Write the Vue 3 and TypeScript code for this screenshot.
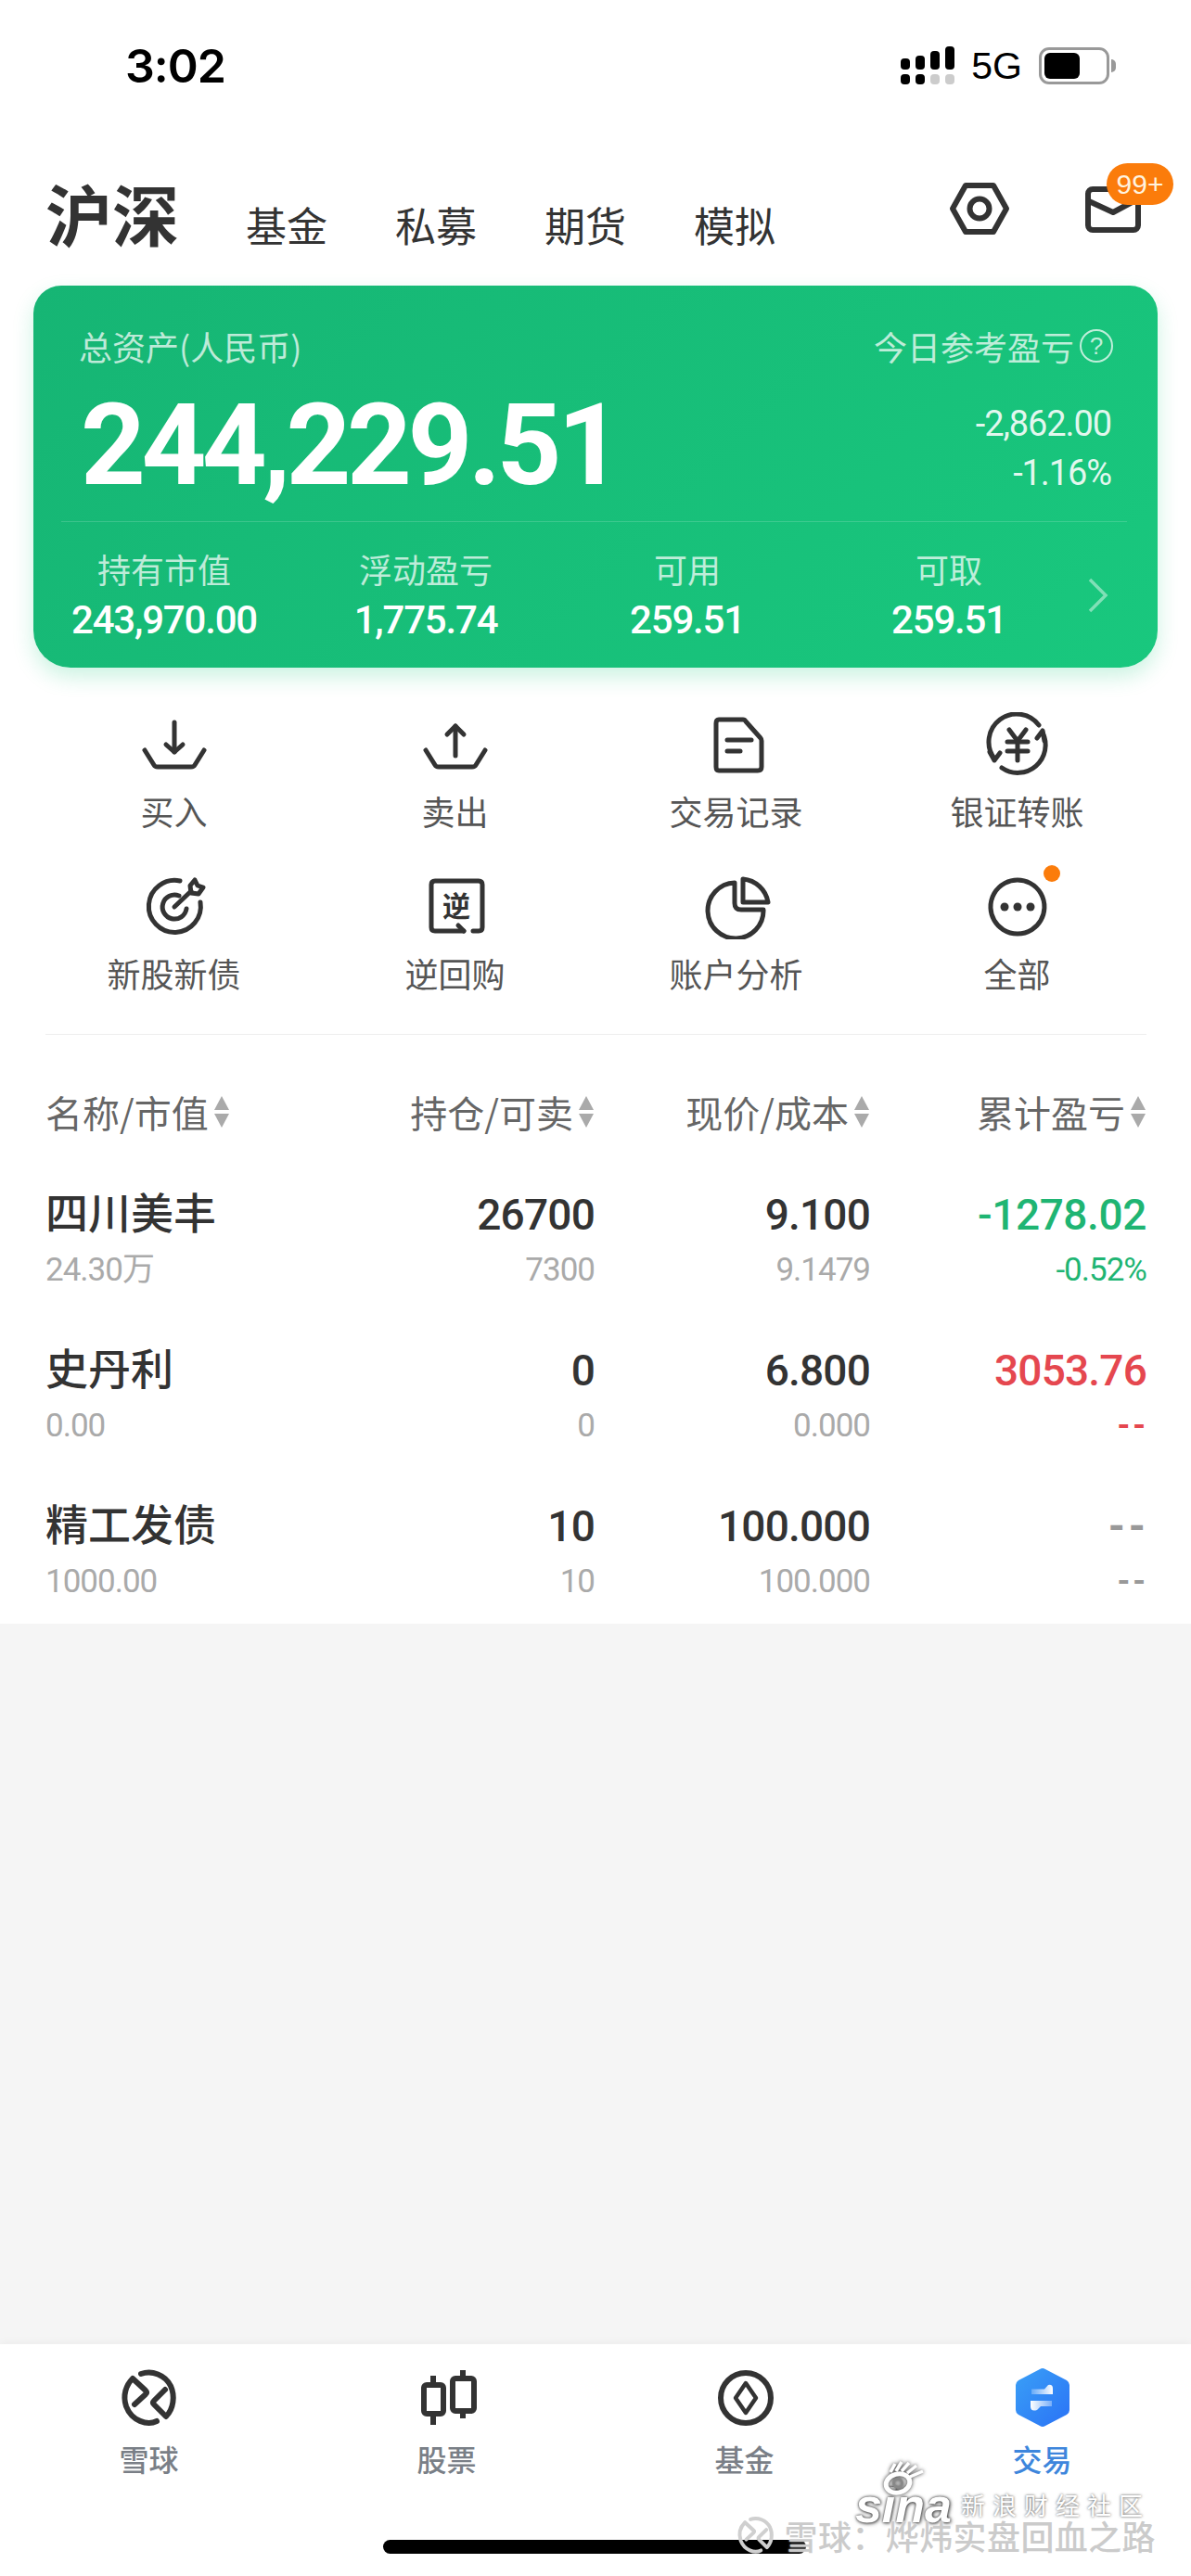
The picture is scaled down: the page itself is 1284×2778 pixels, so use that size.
<script setup lang="ts">
interface Action {
  label: string
  paths: string[]
  glyph?: string
  dot?: boolean
}

interface Position {
  name: string
  value: string
  qty: string
  sellable: string
  price: string
  cost: string
  pnl: string
  pnlPct: string
  tone: string
}

const basket = 'M8 41 L18 57 Q19 59 22 59 H58 Q61 59 62 57 L72 41'

const tabs = ['基金', '私募', '期货', '模拟']

const stats = [
  { label: '持有市值', value: '243,970.00' },
  { label: '浮动盈亏', value: '1,775.74' },
  { label: '可用', value: '259.51' },
  { label: '可取', value: '259.51' },
]

const actions: Action[] = [
  { label: '买入', paths: [basket, 'M40 11 V43', 'M31 35 L40 43 L49 35'] },
  { label: '卖出', paths: [basket, 'M40 47 V15', 'M31 24 L40 15 L49 24'] },
  {
    label: '交易记录',
    paths: [
      'M21 8 H47 Q49 8 50 10 L66 28 Q67 29 67 31 V59 Q67 63 63 63 H21 Q18 63 18 59 V12 Q18 8 21 8 Z',
      'M30 30 H56',
      'M30 42 H44',
    ],
  },
  {
    label: '银证转账',
    paths: [
      'M15 50 A30 30 0 0 1 63 14',
      'M67 22 A30 30 0 0 1 23 60',
      'M61 28 L67 20 L69 31',
      'M10 43 L15 52 L21 44',
      'M31 19 L40 31 L49 19',
      'M29 32 H51',
      'M29 42 H51',
      'M40 32 V52',
    ],
  },
  {
    label: '新股新债',
    paths: [
      'M46 7 A28 28 0 1 0 68 30',
      'M45 23 A13 13 0 1 0 53 37',
      'M40 35 L58 18',
      'M57 12 L62 6 L65 12 L71 14 L66 21 L58 20 Z',
    ],
  },
  {
    label: '逆回购',
    paths: [
      'M59 61 H65 Q69 61 69 57 V11 Q69 7 65 7 H18 Q14 7 14 11 V57 Q14 61 18 61 H49',
      'M43 55 L49 61',
    ],
    glyph: '逆',
  },
  {
    label: '账户分析',
    paths: [
      'M38 9 A30 30 0 1 0 69 38 H45 Q38 38 38 31 Z',
      'M47 5 A30 30 0 0 1 74 30 H47 Z',
    ],
  },
  {
    label: '全部',
    paths: [
      'M40 6 A29 29 0 1 1 39.9 6 Z',
      'M26 35 h0.01',
      'M40 35 h0.01',
      'M54 35 h0.01',
    ],
    dot: true,
  },
]

const columns = ['持仓/可卖', '现价/成本', '累计盈亏']

const positions: Position[] = [
  { name: '四川美丰', value: '24.30万', qty: '26700', sellable: '7300', price: '9.100', cost: '9.1479', pnl: '-1278.02', pnlPct: '-0.52%', tone: 'down' },
  { name: '史丹利', value: '0.00', qty: '0', sellable: '0', price: '6.800', cost: '0.000', pnl: '3053.76', pnlPct: '--', tone: 'up' },
  { name: '精工发债', value: '1000.00', qty: '10', sellable: '10', price: '100.000', cost: '100.000', pnl: '--', pnlPct: '--', tone: 'flat' },
]

const snowball = [
  'M43 60 C33 65 16 60 10 44 C6 32 10 21 17 14 L31 27 Q33 29 31 31 L19 42',
  'M26 9 C38 5 52 10 58 22 C63 33 61 47 53 55 L40 42 Q38 40 40 38 L52 26',
]
</script>

<template>
  <div class="page">
    <div class="status">
      <span class="time">3:02</span>
      <div class="status-right">
        <svg class="signal" width="60" height="42" viewBox="0 0 60 42">
          <rect x="0" y="13" width="10" height="12" rx="4" fill="#000" />
          <rect x="16" y="10" width="10" height="15" rx="4" fill="#000" />
          <rect x="32" y="5" width="10" height="20" rx="4" fill="#000" />
          <rect x="48" y="0" width="10" height="25" rx="4" fill="#000" />
          <rect x="0" y="30" width="10" height="11" rx="4" fill="#000" />
          <rect x="16" y="30" width="10" height="11" rx="4" fill="#000" />
          <rect x="32" y="30" width="10" height="11" rx="4" fill="#ccc" />
          <rect x="48" y="30" width="10" height="11" rx="4" fill="#ccc" />
        </svg>
        <span class="net">5G</span>
        <div class="battery"><div class="battery-fill"></div></div>
        <div class="battery-nub"></div>
      </div>
    </div>

    <div class="header">
      <span class="market">沪深</span>
      <span v-for="tab in tabs" :key="tab" class="tab">{{ tab }}</span>
      <div class="header-icons">
        <svg width="66" height="60" viewBox="0 0 66 60" fill="none" stroke="#333" stroke-width="6" stroke-linejoin="round">
          <path d="M18 5 H48 L62 30 L48 55 H18 L4 30 Z" />
          <circle cx="33" cy="30" r="10.5" />
        </svg>
        <div class="mail">
          <svg width="62" height="52" viewBox="0 0 62 52" fill="none" stroke="#333" stroke-width="6" stroke-linejoin="round" stroke-linecap="round">
            <rect x="4" y="4" width="54" height="44" rx="5" />
            <path d="M5 17 L31 29 L57 15" />
          </svg>
          <span class="badge">99+</span>
        </div>
      </div>
    </div>

    <div class="card">
      <div class="card-top">
        <span>总资产(人民币)</span>
        <span class="today">今日参考盈亏<i class="help">?</i></span>
      </div>
      <div class="hero">
        <span class="total">244,229.51</span>
        <div class="today-values">
          <span>-2,862.00</span>
          <span>-1.16%</span>
        </div>
      </div>
      <div class="stats">
        <div v-for="s in stats" :key="s.label" class="stat">
          <span class="stat-label">{{ s.label }}</span>
          <span class="stat-value">{{ s.value }}</span>
        </div>
      </div>
      <svg class="chevron" width="26" height="38" viewBox="0 0 26 38" fill="none" stroke="rgba(255,255,255,0.45)" stroke-width="3.5">
        <path d="M4 2 L21 19 L4 36" />
      </svg>
    </div>

    <div class="actions">
      <div v-for="a in actions" :key="a.label" class="action">
        <div class="action-icon">
          <svg width="80" height="70" viewBox="0 0 80 70" fill="none" stroke="#333" stroke-width="5" stroke-linecap="round" stroke-linejoin="round">
            <path v-for="d in a.paths" :key="d" :d="d" :stroke-width="d.includes('h0.01') ? 9 : 5" />
            <text v-if="a.glyph" x="41" y="45" text-anchor="middle" class="glyph">{{ a.glyph }}</text>
          </svg>
          <span v-if="a.dot" class="dot"></span>
        </div>
        <span class="action-label">{{ a.label }}</span>
      </div>
    </div>

    <div class="table">
      <div class="table-head">
        <div class="th th-name">
          名称/市值
          <svg class="sort" width="18" height="36" viewBox="0 0 18 36" fill="#aaa"><path d="M9 1 L17 16 H1 Z M9 35 L1 20 H17 Z" /></svg>
        </div>
        <div v-for="c in columns" :key="c" class="th">
          {{ c }}
          <svg class="sort" width="18" height="36" viewBox="0 0 18 36" fill="#aaa"><path d="M9 1 L17 16 H1 Z M9 35 L1 20 H17 Z" /></svg>
        </div>
      </div>
      <div v-for="p in positions" :key="p.name" class="row">
        <div class="cell cell-name">
          <span class="name">{{ p.name }}</span>
          <span class="sub">{{ p.value }}</span>
        </div>
        <div class="cell">
          <span class="num">{{ p.qty }}</span>
          <span class="sub">{{ p.sellable }}</span>
        </div>
        <div class="cell">
          <span class="num">{{ p.price }}</span>
          <span class="sub">{{ p.cost }}</span>
        </div>
        <div class="cell">
          <span class="num" :class="[p.tone, { dash: p.pnl === '--' }]">{{ p.pnl }}</span>
          <span class="sub" :class="[p.tone, { dash: p.pnlPct === '--' }]">{{ p.pnlPct }}</span>
        </div>
      </div>
    </div>

    <div class="filler"></div>

    <div class="nav">
      <div class="nav-item">
        <svg width="70" height="70" viewBox="0 0 70 70" fill="none" stroke="#333" stroke-width="6" stroke-linecap="round" stroke-linejoin="round">
          <path v-for="d in snowball" :key="d" :d="d" />
        </svg>
        <span>雪球</span>
      </div>
      <div class="nav-item">
        <svg width="70" height="70" viewBox="0 0 70 70" fill="none" stroke="#333" stroke-width="6" stroke-linejoin="round">
          <rect x="10" y="21" width="21" height="31" rx="3" />
          <rect x="41" y="14" width="23" height="35" rx="3" />
          <path d="M20 11 V21 M20 52 V64 M52 5 V14 M52 49 V57" />
        </svg>
        <span>股票</span>
      </div>
      <div class="nav-item">
        <svg width="70" height="70" viewBox="0 0 70 70" fill="none" stroke="#333">
          <circle cx="36" cy="35" r="27" stroke-width="6" />
          <path d="M36 19 L47 35 L36 51 L25 35 Z" stroke-width="4.5" stroke-linejoin="round" />
        </svg>
        <span>基金</span>
      </div>
      <div class="nav-item active">
        <svg width="70" height="70" viewBox="2 0 70 70">
          <defs>
            <linearGradient id="trade-fill" x1="0" y1="0" x2="1" y2="1">
              <stop offset="0" stop-color="#3aa0f6" />
              <stop offset="1" stop-color="#2a72f6" />
            </linearGradient>
            <linearGradient id="trade-up">
              <stop offset="0" stop-color="#fff" stop-opacity="0.25" />
              <stop offset="1" stop-color="#fff" />
            </linearGradient>
            <linearGradient id="trade-down">
              <stop offset="0" stop-color="#fff" />
              <stop offset="1" stop-color="#fff" stop-opacity="0.35" />
            </linearGradient>
          </defs>
          <path d="M34 4 Q37 2 40 4 L63 16 Q66 18 66 21 V48 Q66 51 63 53 L40 65 Q37 67 34 65 L11 53 Q8 51 8 48 V21 Q8 18 11 16 Z" fill="url(#trade-fill)" />
          <path d="M25 25.5 H39 L43 21 Q48 20 48 25 V31 H25 Z" fill="url(#trade-up)" />
          <path d="M24 38 H47 V44 H35 L31 48 Q24 50 24 44 Z" fill="url(#trade-down)" />
        </svg>
        <span>交易</span>
      </div>
      <div class="home-bar"></div>
    </div>

    <div class="watermark">
      <div class="wm-top">
        <div class="sina">
          <svg class="sina-eye" width="46" height="38" viewBox="0 0 46 38" fill="none" stroke="#fff" stroke-width="5">
            <ellipse cx="17" cy="24" rx="13" ry="10" transform="rotate(-15 17 24)" />
            <circle cx="17" cy="24" r="4.5" stroke="#888" stroke-width="3" />
            <path d="M9 12 L14 3 M15 11 L21 1 M21 11 L29 2 M27 13 L37 5 M30 17 L44 11" stroke-width="3.5" />
          </svg>
          <span class="sina-text">sina</span>
        </div>
        <span class="wm-site">新浪财经社区</span>
      </div>
      <div class="wm-bottom">
        <svg width="46" height="46" viewBox="0 0 70 70" fill="none" stroke="#cfcfcf" stroke-width="6" stroke-linecap="round" stroke-linejoin="round">
          <path v-for="d in snowball" :key="d" :d="d" />
        </svg>
        <span class="wm-author">雪球：烨炜实盘回血之路</span>
      </div>
    </div>
  </div>
</template>

<style>
html,
body {
  margin: 0;
  background: #fff;
}
</style>

<style scoped>
.page {
  position: relative;
  width: 1284px;
  height: 2778px;
  display: flex;
  flex-direction: column;
  overflow: hidden;
  background: #fff;
  color: #333;
  font-family: "Noto Sans CJK SC", "Liberation Sans", sans-serif;
}

/* status bar */
.status {
  height: 142px;
  display: flex;
  align-items: center;
  justify-content: space-between;
  padding: 0 81px 0 135px;
  color: #000;
  flex: none;
}

.time {
  font-family: Inter, sans-serif;
  font-size: 50px;
  font-weight: 600;
  letter-spacing: -1px;
}

.status-right {
  display: flex;
  align-items: center;
}

.net {
  margin: 0 18px 0 16px;
  font-family: "Liberation Sans", sans-serif;
  font-size: 41px;
}

.battery {
  box-sizing: border-box;
  width: 76px;
  height: 40px;
  border: 3px solid #999;
  border-radius: 11px;
  padding: 3px;
}

.battery-fill {
  width: 38px;
  height: 100%;
  background: #000;
  border-radius: 6px;
}

.battery-nub {
  width: 5px;
  height: 14px;
  margin-left: 2px;
  background: #999;
  border-radius: 0 5px 5px 0;
}

/* header */
.header {
  height: 166px;
  flex: none;
  display: flex;
  align-items: flex-end;
  box-sizing: border-box;
  padding: 0 37px 34px 49px;
}

.market {
  font-size: 72px;
  line-height: 90px;
  font-weight: 600;
  margin-right: 72px;
}

.tab {
  font-size: 44px;
  line-height: 64px;
  margin-right: 73px;
}

.header-icons {
  margin-left: auto;
  align-self: flex-start;
  display: flex;
  align-items: flex-start;
  gap: 80px;
  margin-top: 53px;
}

.mail {
  position: relative;
  width: 78px;
  height: 52px;
  margin-top: 5px;
}

.badge {
  position: absolute;
  left: 24px;
  top: -24px;
  width: 72px;
  height: 45px;
  border-radius: 23px;
  background: #fb7c0b;
  color: #fff3df;
  font-family: "Liberation Sans", sans-serif;
  font-size: 30px;
  line-height: 45px;
  text-align: center;
}

/* asset card */
.card {
  position: relative;
  flex: none;
  box-sizing: border-box;
  height: 412px;
  margin: 0 36px;
  border-radius: 30px 30px 40px 40px;
  background: linear-gradient(135deg, #16b574 0%, #19c87e 100%);
  box-shadow: 0 10px 22px rgba(25, 200, 125, 0.22);
  color: #fff;
}

.card-top {
  display: flex;
  justify-content: space-between;
  padding: 44px 48px 0 49px;
  font-size: 36px;
  line-height: 42px;
  color: rgba(255, 255, 255, 0.72);
}

.today {
  display: flex;
  align-items: center;
}

.help {
  box-sizing: border-box;
  width: 36px;
  height: 36px;
  margin-left: 6px;
  border: 2px solid rgba(255, 255, 255, 0.72);
  border-radius: 50%;
  font-style: normal;
  font-size: 26px;
  line-height: 32px;
  text-align: center;
  font-family: "Liberation Sans", sans-serif;
}

.hero {
  height: 168px;
  display: flex;
  align-items: center;
  justify-content: space-between;
  margin: 0 33px 0 30px;
  padding: 0 17px 0 21px;
  border-bottom: 1px solid rgba(255, 255, 255, 0.16);
}

.total {
  padding-top: 5px;
  font-family: Roboto, sans-serif;
  font-size: 122px;
  font-weight: 700;
  letter-spacing: -4.6px;
  line-height: 140px;
}

.today-values {
  display: flex;
  flex-direction: column;
  align-items: flex-end;
  gap: 9px;
  padding-top: 11px;
  font-family: Roboto, sans-serif;
  font-size: 38px;
  line-height: 44px;
  letter-spacing: -1.1px;
  color: rgba(255, 255, 255, 0.88);
}

.stats {
  display: grid;
  grid-template-columns: repeat(4, 282px);
  padding-top: 30px;
}

.stat {
  display: flex;
  flex-direction: column;
  align-items: center;
}

.stat-label {
  font-size: 36px;
  line-height: 40px;
  color: rgba(255, 255, 255, 0.72);
}

.stat-value {
  margin-top: 11px;
  font-family: Roboto, sans-serif;
  font-size: 42px;
  font-weight: 500;
  line-height: 50px;
  letter-spacing: -1.2px;
}

.chevron {
  position: absolute;
  left: 1135px;
  top: 315px;
}

/* quick actions */
.actions {
  flex: none;
  display: grid;
  grid-template-columns: repeat(4, 303px);
  row-gap: 45px;
  padding: 48px 36px 0;
}

.action {
  display: flex;
  flex-direction: column;
  align-items: center;
}

.action-icon {
  position: relative;
  height: 70px;
}

.glyph {
  font-size: 30px;
  font-weight: 700;
  fill: #333;
  stroke: none;
}

.dot {
  position: absolute;
  left: 68px;
  top: -10px;
  width: 18px;
  height: 18px;
  border-radius: 50%;
  background: #fb7c0b;
}

.action-label {
  margin-top: 14px;
  padding-bottom: 2px;
  font-size: 36px;
  line-height: 44px;
  color: #555;
}

/* holdings */
.table {
  flex: none;
  margin-top: 42px;
  padding: 0 48px 17px 49px;
}

.table::before {
  content: "";
  display: block;
  height: 1px;
  background: #eee;
}

.table-head,
.row {
  display: grid;
  grid-template-columns: 301px 291px 297px 298px;
}

.table-head {
  margin-top: 61px;
}

.th {
  display: flex;
  align-items: center;
  justify-content: flex-end;
  gap: 5px;
  font-size: 40px;
  line-height: 44px;
  color: #666;
  white-space: nowrap;
}

.th-name {
  justify-content: flex-start;
}

.row {
  height: 120px;
  margin-top: 48px;
}

.table-head + .row {
  margin-top: 57px;
}

.cell {
  display: flex;
  flex-direction: column;
  align-items: flex-end;
}

.cell-name {
  align-items: flex-start;
}

.name {
  height: 60px;
  margin-top: -3px;
  margin-bottom: 3px;
  font-size: 46px;
  line-height: 60px;
  font-weight: 500;
}

.num {
  height: 60px;
  padding-top: 2px;
  margin-bottom: -2px;
  font-family: Roboto, sans-serif;
  font-size: 46px;
  font-weight: 500;
  line-height: 60px;
  letter-spacing: -0.8px;
}

.sub {
  height: 60px;
  padding-top: 2px;
  font-family: Roboto, "Noto Sans CJK SC", sans-serif;
  font-size: 35px;
  line-height: 60px;
  letter-spacing: -1px;
  color: #aaa;
}

.num.down {
  letter-spacing: -0.4px;
}

.num.up,
.down {
  color: #1fb573;
}

.num.up,
.sub.up {
  color: #e5474f;
}

.sub.down {
  color: #1fb573;
}

.flat,
.sub.flat {
  color: #999;
}

.dash {
  font-weight: 700;
}

.num.dash {
  letter-spacing: 4px;
  margin-right: -3px;
}

.sub.dash {
  letter-spacing: 3px;
  margin-right: -2px;
}

.filler {
  flex: 1;
  background: #f5f5f5;
}

/* bottom tabs */
.nav {
  position: relative;
  flex: none;
  height: 250px;
  display: grid;
  grid-template-columns: repeat(4, 321px);
  align-items: start;
  box-shadow: 0 -3px 8px rgba(0, 0, 0, 0.03);
  background: #fff;
}

.nav-item {
  display: flex;
  flex-direction: column;
  align-items: center;
  padding-top: 23px;
  font-size: 32px;
  line-height: 40px;
  font-weight: 500;
  color: #7a7f87;
}

.nav-item span {
  margin-top: 10px;
}

.nav-item.active {
  color: #3e86dc;
}

.home-bar {
  position: absolute;
  left: 413px;
  top: 211px;
  width: 456px;
  height: 15px;
  border-radius: 8px;
  background: #000;
}

/* watermark over the bottom right corner */
.watermark {
  position: absolute;
  right: 38px;
  top: 2654px;
  display: flex;
  flex-direction: column;
  align-items: flex-end;
}

.wm-top {
  display: flex;
  align-items: flex-end;
  padding-right: 14px;
}

.sina {
  display: flex;
  flex-direction: column;
  align-items: center;
  margin-right: 10px;
}

.sina-eye {
  margin-bottom: -4px;
  filter: drop-shadow(0 0 2px #333);
}

.sina-text {
  font-family: "Liberation Sans", sans-serif;
  font-size: 52px;
  font-style: italic;
  font-weight: 700;
  line-height: 28px;
  color: #fff;
  text-shadow: 0 0 3px #333, 1px 1px 4px #555;
}

.wm-site {
  font-size: 26px;
  line-height: 30px;
  letter-spacing: 8px;
  margin-right: -8px;
  color: #fff;
  text-shadow: 0 0 3px #444;
}

.wm-bottom {
  display: flex;
  align-items: center;
  gap: 8px;
  margin-top: -5px;
}

.wm-author {
  font-size: 36px;
  line-height: 42px;
  font-weight: 500;
  letter-spacing: 0.4px;
  color: #cbcbcb;
  text-shadow: 0 0 2px #fff;
}
</style>
